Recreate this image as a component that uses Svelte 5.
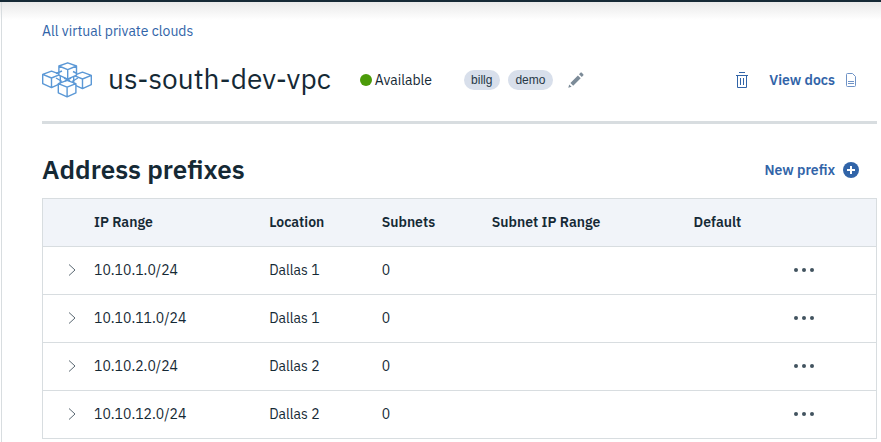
<script>
  const tags = ['billg', 'demo'];
  const prefixes = [
    { range: '10.10.1.0/24', location: 'Dallas 1', subnets: 0 },
    { range: '10.10.11.0/24', location: 'Dallas 1', subnets: 0 },
    { range: '10.10.2.0/24', location: 'Dallas 2', subnets: 0 },
    { range: '10.10.12.0/24', location: 'Dallas 2', subnets: 0 }
  ];
</script>

{#snippet cube()}
  <path d="M0 3.4 8.8 0.2 17.6 3.4V12.6L8.8 16.6 0 12.6ZM0 3.4 8.8 7 17.6 3.4M8.8 7V16.6" />
{/snippet}

<div class="page">
  <main>
    <nav><a href="#vpcs">All virtual private clouds</a></nav>

    <header>
      <svg class="logo" width="50" height="36" viewBox="0 0 50 36" aria-hidden="true">
        <g transform="translate(0.7 9)">{@render cube()}</g>
        <g transform="translate(31.7 10)">{@render cube()}</g>
        <g transform="translate(16.9 0.6)">{@render cube()}</g>
        <g transform="translate(16.3 18.2)">{@render cube()}</g>
        <path d="M14 11.5 20 9M31 9.5l4 2M14 16l6 3.5M36 16l-6 3.5M22 16l6 3M29 16l-6 3" />
      </svg>
      <h1>us-south-dev-vpc</h1>
      <span class="status"><i></i>Available</span>
      <div class="tags">
        {#each tags as tag}
          <span class="tag">{tag}</span>
        {/each}
      </div>
      <button class="edit" aria-label="Edit tags">
        <svg width="16" height="16" viewBox="0 0 16 16" fill="#7c8b98">
          <path d="M0.3 15.7 1.2 12.4 3.6 14.8ZM2.4 10.9 9.9 3.4 12.7 6.2 5.2 13.7ZM11 2.3 12.7 0.6Q13.2 0.2 13.6 0.6L15.4 2.4Q15.8 2.8 15.4 3.3L13.8 5.1Z" />
        </svg>
      </button>
      <div class="actions">
        <button aria-label="Delete">
          <svg width="12" height="16" viewBox="0 0 12 16" fill="none" stroke="#3164a8">
            <path d="M3 0.5h6M0 3.5h12M1.5 3.5v12h9v-12M4.5 6v7M7.5 6v7" />
          </svg>
        </button>
        <a class="docs" href="#docs">
          View docs
          <svg width="10" height="14" viewBox="0 0 10 14" fill="none" stroke="#6f93c6">
            <path d="M1.5 0.5H6.5L9.5 3.5V12.5Q9.5 13.5 8.5 13.5H1.5Q0.5 13.5 0.5 12.5V1.5Q0.5 0.5 1.5 0.5ZM2 8.5h6M2 10.5h6" />
          </svg>
        </a>
      </div>
    </header>

    <section>
      <div class="title">
        <h2>Address prefixes</h2>
        <button class="new">
          New prefix
          <svg width="16" height="16" viewBox="0 0 16 16" aria-hidden="true">
            <circle cx="8" cy="8" r="8" fill="#3164a8" />
            <path d="M8 4v8M4 8h8" stroke="#fff" stroke-width="2" />
          </svg>
        </button>
      </div>
      <table>
        <thead>
          <tr>
            <th class="expand"></th>
            <th class="range">IP Range</th>
            <th class="location">Location</th>
            <th class="subnets">Subnets</th>
            <th class="subrange">Subnet IP Range</th>
            <th class="default">Default</th>
            <th></th>
          </tr>
        </thead>
        <tbody>
          {#each prefixes as prefix}
            <tr>
              <td class="expand">
                <button aria-label="Expand {prefix.range}">
                  <svg width="8" height="12" viewBox="0 0 8 12" fill="none" stroke="#5a6872">
                    <path d="M1 0.5 7 6 1 11.5" />
                  </svg>
                </button>
              </td>
              <td>{prefix.range}</td>
              <td>{prefix.location}</td>
              <td>{prefix.subnets}</td>
              <td></td>
              <td></td>
              <td>
                <button aria-label="Actions for {prefix.range}">
                  <svg width="24" height="4" viewBox="0 0 24 4" fill="#42535f">
                    <circle cx="4" cy="2" r="2" />
                    <circle cx="12" cy="2" r="2" />
                    <circle cx="20" cy="2" r="2" />
                  </svg>
                </button>
              </td>
            </tr>
          {/each}
        </tbody>
      </table>
    </section>
  </main>
</div>

<style>
  :global(body) {
    background: #fff;
  }
  .page {
    border-top: 2px solid #152935;
    padding-left: 1px;
    font: 14px/20px 'IBM Plex Sans', Roboto, sans-serif;
    color: #152935;
    background: linear-gradient(#e9e9e9, #fff 18px);
  }
  main {
    border-left: 1px solid #d8dde0;
    padding: 19px 4px 3px 40px;
  }
  a {
    color: #3164a8;
    text-decoration: none;
  }
  button {
    display: flex;
    align-items: center;
    margin: 0;
    padding: 0;
    border: 0;
    background: none;
    color: inherit;
    font: inherit;
    cursor: pointer;
  }
  svg {
    display: block;
    flex: none;
  }
  header {
    display: flex;
    align-items: center;
    height: 78px;
    padding-bottom: 2px;
    border-bottom: 3px solid #d8dde0;
  }
  .logo {
    fill: none;
    stroke: #5b98d6;
    stroke-width: 1.4;
    stroke-linejoin: round;
  }
  .logo g {
    fill: #fff;
  }
  h1 {
    margin: 0 0 2px 16px;
    font-size: 28px;
    line-height: 36px;
    font-weight: 400;
  }
  .status {
    display: flex;
    align-items: center;
    gap: 3px;
    margin-left: 29px;
  }
  .status i {
    width: 12px;
    height: 12px;
    border-radius: 50%;
    background: #4b9b09;
  }
  .tags {
    display: flex;
    gap: 8px;
    margin-left: 32px;
  }
  .tag {
    padding: 0 8px 0 7px;
    border-radius: 10px;
    background: #d8dfeb;
    color: #263746;
    font: 12px/20px 'Liberation Sans', sans-serif;
  }
  .edit {
    margin-left: 15px;
  }
  .actions {
    display: flex;
    align-items: center;
    gap: 21px;
    margin-left: auto;
    padding-right: 21px;
  }
  .docs {
    display: flex;
    align-items: center;
    gap: 11px;
    font-weight: 600;
  }
  .title {
    display: flex;
    align-items: center;
    justify-content: space-between;
    height: 36px;
    padding: 28px 18px 10px 0;
  }
  h2 {
    margin: 0 0 2px;
    font-size: 26px;
    line-height: 34px;
    font-weight: 600;
  }
  .new {
    gap: 8px;
    color: #3164a8;
    font-weight: 600;
  }
  table {
    width: 100%;
    table-layout: fixed;
    border-collapse: collapse;
    border: 1px solid #d8dde0;
    background: #fff;
  }
  tr {
    height: 48px;
    border-bottom: 1px solid #d8dde0;
  }
  thead {
    background: #f1f4f9;
  }
  th,
  td {
    padding: 0 0 2px;
    text-align: left;
  }
  th {
    font-weight: 600;
  }
  th.expand {
    width: 51px;
  }
  td.expand {
    padding-left: 25px;
  }
  .range {
    width: 21%;
  }
  .location {
    width: 13.5%;
  }
  .subnets {
    width: 13.2%;
  }
  .subrange {
    width: 24.2%;
  }
  .default {
    width: 11.8%;
  }
</style>
